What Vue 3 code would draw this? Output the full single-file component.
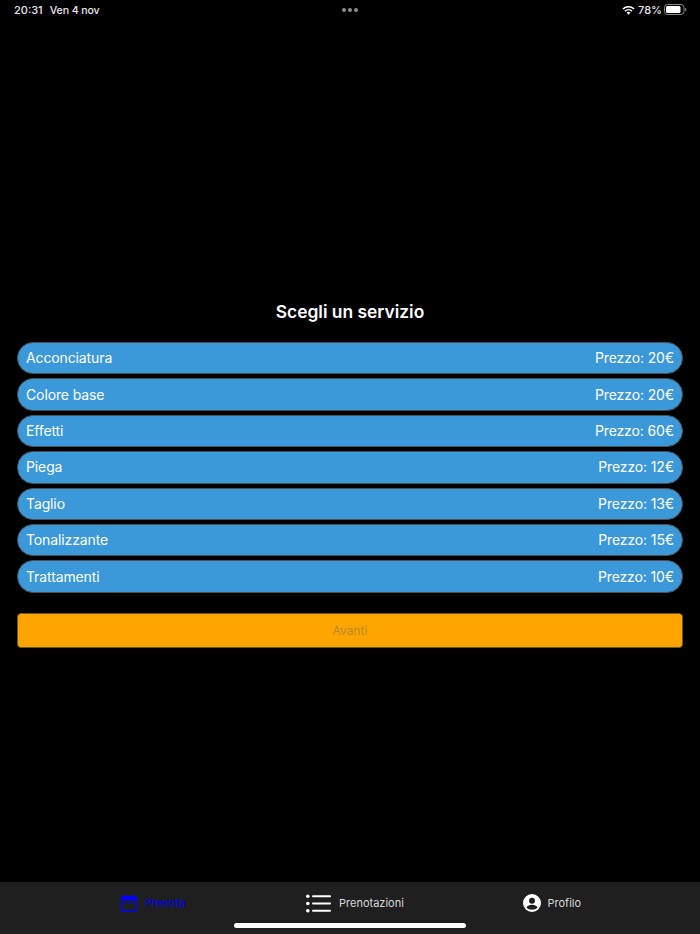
<script setup>
const services = [
  ['Acconciatura', 'Prezzo: 20€'],
  ['Colore base', 'Prezzo: 20€'],
  ['Effetti', 'Prezzo: 60€'],
  ['Piega', 'Prezzo: 12€'],
  ['Taglio', 'Prezzo: 13€'],
  ['Tonalizzante', 'Prezzo: 15€'],
  ['Trattamenti', 'Prezzo: 10€'],
]
</script>

<template>
  <div class="screen">
    <header class="status">
      <div class="status-left"><span>20:31</span><span class="date">Ven 4 nov</span></div>
      <div class="dots"><i></i><i></i><i></i></div>
      <div class="status-right">
        <svg class="wifi" width="13" height="10" viewBox="0 0 13 10">
          <path d="M0.4 3.4A8.8 8.8 0 0 1 12.6 3.4L11.5 4.6A7.2 7.2 0 0 0 1.5 4.6Z" fill="#fff"/>
          <path d="M2.5 5.5A5.8 5.8 0 0 1 10.5 5.5L9.4 6.7A4.2 4.2 0 0 0 3.6 6.7Z" fill="#fff"/>
          <path d="M4.6 7.6A2.8 2.8 0 0 1 8.4 7.6L6.5 9.7Z" fill="#fff"/>
        </svg>
        <span class="pct">78%</span>
        <svg class="battery" width="23" height="11" viewBox="0 0 23 11">
          <rect x="0.5" y="0.5" width="19.5" height="10" rx="3" fill="none" stroke="#8a8a8a"/>
          <rect x="2" y="2" width="14.5" height="7" rx="1.5" fill="#fff"/>
          <path d="M21.2 3.8C22 4 22.5 4.7 22.5 5.5S22 7 21.2 7.2Z" fill="#8a8a8a"/>
        </svg>
      </div>
    </header>

    <main class="content">
      <h1 class="title">Scegli un servizio</h1>
      <ul class="list">
        <li v-for="s in services" :key="s[0]" class="item">
          <span>{{ s[0] }}</span><span>{{ s[1] }}</span>
        </li>
      </ul>
      <button class="next" type="button">Avanti</button>
    </main>

    <nav class="tabs">
      <div class="tab active tab-book">
        <svg width="16" height="18" viewBox="0 0 16 18">
          <path d="M3 0.5H5V2H11V0.5H13V2H14A2 2 0 0 1 16 4V16A2 2 0 0 1 14 18H2A2 2 0 0 1 0 16V4A2 2 0 0 1 2 2H3Z" fill="#0000ff"/>
          <rect x="1.5" y="6.5" width="13" height="10" rx="0.8" fill="#1f1f1f"/>
          <rect x="3.5" y="8" width="1.6" height="1.6" fill="#0000ff"/>
          <rect x="7.2" y="8" width="1.6" height="1.6" fill="#0000ff"/>
          <rect x="10.9" y="8" width="1.6" height="1.6" fill="#0000ff"/>
        </svg>
        <span>Prenota</span>
      </div>
      <div class="tab tab-list">
        <svg width="25" height="19" viewBox="0 0 25 19">
          <circle cx="1.8" cy="2.2" r="1.8" fill="#fff"/>
          <circle cx="1.8" cy="9.5" r="1.8" fill="#fff"/>
          <circle cx="1.8" cy="16.8" r="1.8" fill="#fff"/>
          <rect x="6" y="1.2" width="19" height="2" rx="1" fill="#fff"/>
          <rect x="6" y="8.5" width="19" height="2" rx="1" fill="#fff"/>
          <rect x="6" y="15.8" width="19" height="2" rx="1" fill="#fff"/>
        </svg>
        <span>Prenotazioni</span>
      </div>
      <div class="tab tab-profile">
        <svg width="18" height="18" viewBox="0 0 18 18">
          <circle cx="9" cy="9" r="9" fill="#fff"/>
          <circle cx="9" cy="6.8" r="3" fill="#1f1f1f"/>
          <path d="M3.4 13.6C4.4 11.6 6.4 10.8 9 10.8S13.6 11.6 14.6 13.6C13.2 15 11.2 15.8 9 15.8S4.8 15 3.4 13.6Z" fill="#1f1f1f"/>
        </svg>
        <span>Profilo</span>
      </div>
      <div class="home"></div>
    </nav>
  </div>
</template>

<style scoped>
.screen {
  width: 700px;
  height: 934px;
  display: flex;
  flex-direction: column;
  background: #000;
  color: #fff;
  font-family: Inter, "Liberation Sans", sans-serif;
  overflow: hidden;
}
.status {
  height: 20px;
  padding: 0 13px 1px 14px;
  box-sizing: border-box;
  display: grid;
  grid-template-columns: 1fr auto 1fr;
  align-items: center;
  font-size: 11px;
  font-weight: 500;
  color: #e8e8e8;
}
.status-left { display: flex; align-items: baseline; gap: 7px; }
.date { font-size: 10.6px; letter-spacing: -0.1px; }
.status-right { display: flex; justify-content: flex-end; align-items: center; }
.wifi { margin-right: 3px; }
.pct { margin-right: 2px; }
.dots { display: flex; gap: 2px; margin-left: -1px; }
.dots i { width: 4px; height: 4px; border-radius: 50%; background: #8c8c8c; }
.content {
  flex: 1;
  padding: 280px 17px 0;
  display: flex;
  flex-direction: column;
}
.title {
  margin: 0;
  height: 24px;
  line-height: 23px;
  text-align: center;
  font-size: 17.4px;
  font-weight: 600;
}
.list {
  list-style: none;
  margin: 18px 0 0;
  padding: 0;
  display: flex;
  flex-direction: column;
  gap: 4px;
}
.item {
  height: 32.4px;
  box-sizing: border-box;
  padding: 0 8px 1px;
  display: flex;
  justify-content: space-between;
  align-items: center;
  background: #3b98d9;
  border: 1px solid #4a5056;
  border-radius: 16.2px;
  font-size: 14px;
  letter-spacing: -0.12px;
}
.next {
  margin-top: 20px;
  height: 35px;
  border: 1px solid #6e5618;
  border-radius: 4px;
  background: #ffa500;
  color: #b98a2c;
  font: 12px Inter, "Liberation Sans", sans-serif;
  padding: 0;
}
.tabs {
  position: relative;
  height: 52px;
  flex: none;
  box-sizing: border-box;
  padding-bottom: 9px;
  background: #1f1f1f;
  display: flex;
  align-items: center;
  font-size: 11px;
  color: #d8d8d8;
}
.tab { position: absolute; top: 11px; display: flex; align-items: center; height: 20px; }
.tab-book { left: 121px; gap: 8px; color: #0000ff; }
.tab-list { left: 306px; gap: 8px; }
.tab-profile { left: 523px; gap: 6.5px; }
.home {
  position: absolute;
  left: 234px;
  bottom: 6px;
  width: 232px;
  height: 5px;
  border-radius: 2.5px;
  background: #fff;
}
</style>
